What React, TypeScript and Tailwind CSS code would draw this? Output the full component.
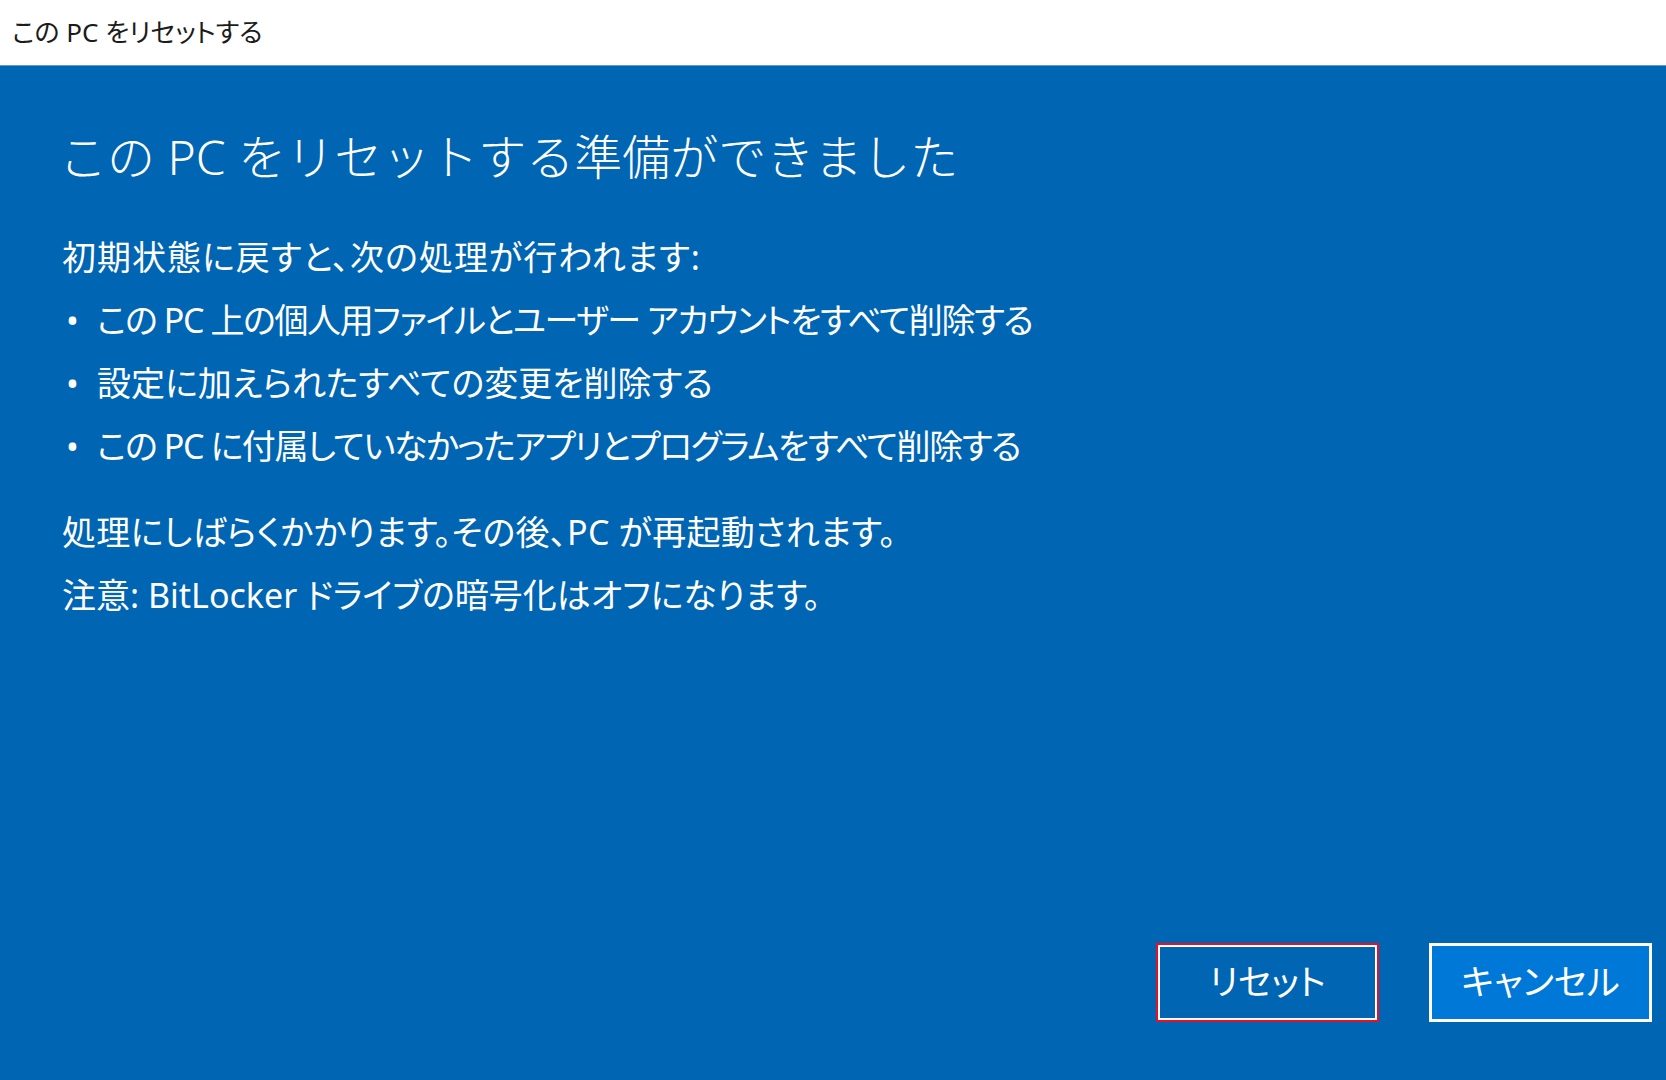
export default function App() {
  const font = "font-['Noto_Sans','Noto_Sans_CJK_JP',sans-serif]";
  const bullets = [
    { text: "この PC 上の個人用ファイルとユーザー アカウントをすべて削除する", cls: "tracking-[-1.4px]" },
    { text: "設定に加えられたすべての変更を削除する", cls: "" },
    { text: "この PC に付属していなかったアプリとプログラムをすべて削除する", cls: "tracking-[-1.4px]" },
  ];

  return (
    <div className={`w-[1666px] h-[1080px] flex flex-col ${font}`}>
      {/* title bar */}
      <div className="h-[66px] bg-white flex items-center px-[12px] border-b border-[#5b9bd5]">
        <span className="text-[26px] text-[#1b1b1b] [font-feature-settings:'palt']">この PC をリセットする</span>
      </div>

      <div className="flex-1 bg-[#0065b3] text-white flex flex-col pl-[62px] pr-[14px] pt-[58px] pb-[58px]">
        <h1 className="text-[48px] leading-[66px] font-light -ml-[3px]">この PC をリセットする準備ができました</h1>

        <div className="mt-[36px] text-[34px] leading-[63px] [font-feature-settings:'palt']">
          <p className="tracking-[1px]">初期状態に戻すと、次の処理が行われます:</p>
          <ul>
            {bullets.map((b) => (
              <li key={b.text} className="flex">
                <span className="w-[35px] pl-[4px]">•</span>
                <span className={b.cls}>{b.text}</span>
              </li>
            ))}
          </ul>
          <p className="mt-[23px] tracking-[0.25px]">処理にしばらくかかります。その後、PC が再起動されます。</p>
          <p>注意: BitLocker ドライブの暗号化はオフになります。</p>
        </div>

        <div className="mt-auto flex justify-end gap-[50px] [font-feature-settings:'palt']">
          <button className="w-[223px] h-[79px] border-2 border-[#e81123] p-0">
            <div className="w-full h-full border-2 border-white flex items-center justify-center text-[35px]">
              リセット
            </div>
          </button>
          <button className="w-[223px] h-[79px] border-[3px] border-white bg-[#0078d7] flex items-center justify-center text-[35px]">
            キャンセル
          </button>
        </div>
      </div>
    </div>
  );
}
